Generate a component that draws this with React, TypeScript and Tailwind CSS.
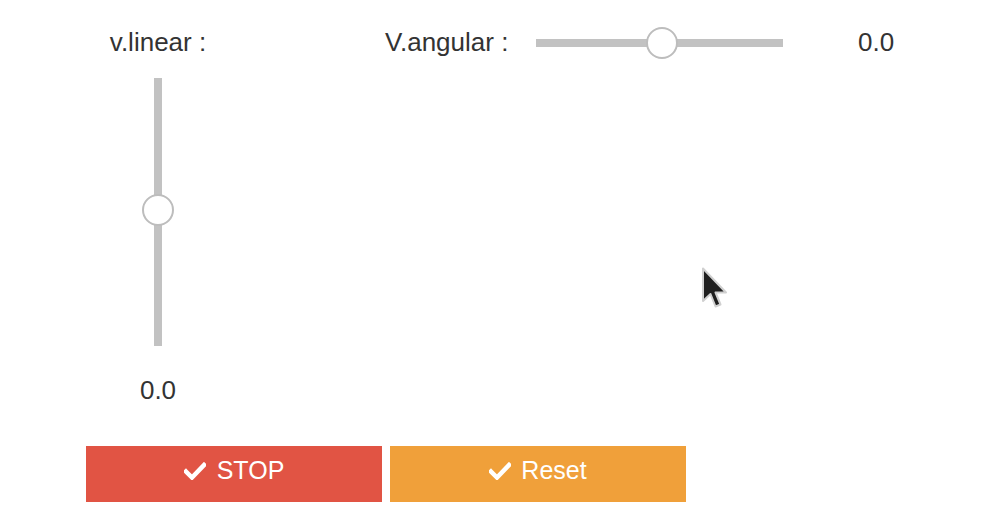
import React from "react";

const font = { fontFamily: '"Liberation Sans", Arial, sans-serif' };

const CheckIcon = () => (
    <svg width="22" height="18" viewBox="0 0 22 18" className="inline-block">
        <path d="M2 9.5 L8 15.5 L20 3" fill="none" stroke="#ffffff" strokeWidth="4.5" strokeLinecap="square"/>
    </svg>
);

const Cursor = () => (
    <svg width="28" height="46" viewBox="0 0 28 46" className="absolute left-[701px] top-[267px]">
        <path d="M2 1.5 L2 34 L9.5 27 L14.5 39.5 L19.5 37.5 L14.5 25.5 L25 25.5 Z"
              fill="#1f1f1f" stroke="#d0d0d0" strokeWidth="2" strokeLinejoin="round"/>
    </svg>
);

const Thumb = () => (
    <div className="w-[32px] h-[32px] rounded-full bg-white border-2 border-[#bdbdbd]"></div>
);

export default function App() {
    return (
        <div className="relative w-[988px] h-[514px] bg-white text-[#333333] overflow-hidden" style={font}>
            <div className="pl-[86px] pt-[27px]">
                <div className="flex">
                    {/* linear */}
                    <div className="w-[144px] flex flex-col items-center">
                        <div className="text-[26px] leading-[30px]">v.linear :</div>
                        <div className="relative mt-[21px] w-[8px] h-[268px] bg-[#c2c2c2]">
                            <div className="absolute left-1/2 top-1/2 -translate-x-1/2 -translate-y-[18px]">
                                <Thumb/>
                            </div>
                        </div>
                        <div className="mt-[29px] text-[26px] leading-[30px]">0.0</div>
                    </div>

                    {/* angular */}
                    <div className="ml-[155px] flex items-start h-[30px]">
                        <div className="text-[26px] leading-[30px] w-[151px]">V.angular :</div>
                        <div className="relative mt-[12px] w-[247px] h-[8px] bg-[#c2c2c2]">
                            <div className="absolute left-1/2 top-1/2 -translate-x-[14px] -translate-y-1/2">
                                <Thumb/>
                            </div>
                        </div>
                        <div className="ml-[75px] text-[26px] leading-[30px]">0.0</div>
                    </div>
                </div>

                <div className="mt-[41px] flex gap-[8px]">
                    <button className="w-[296px] h-[56px] bg-[#e15444] text-white text-[25px] flex items-center justify-center gap-[11px] pb-[6px]">
                        <CheckIcon/>
                        <span>STOP</span>
                    </button>
                    <button className="w-[296px] h-[56px] bg-[#f0a03a] text-white text-[25px] flex items-center justify-center gap-[10px] pb-[6px]">
                        <CheckIcon/>
                        <span>Reset</span>
                    </button>
                </div>
            </div>
            <Cursor/>
        </div>
    );
}
